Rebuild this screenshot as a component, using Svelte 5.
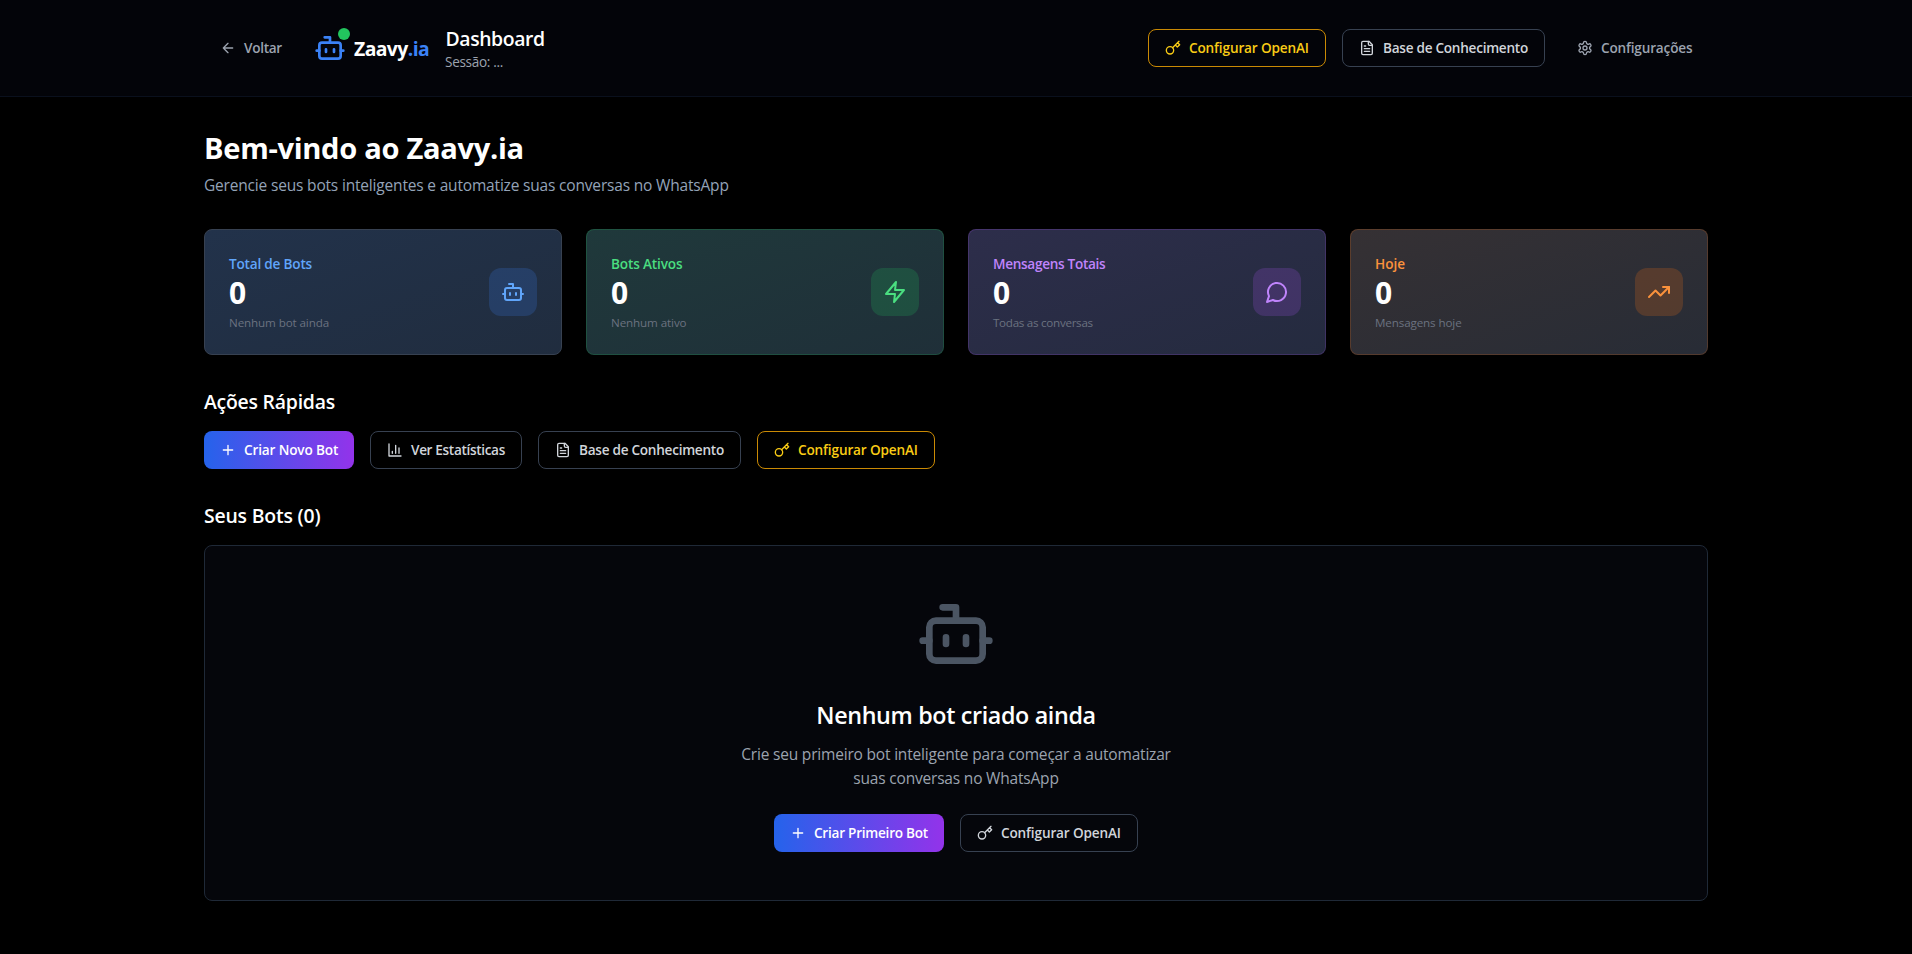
<script>
  const stats = [
    { tone: 'blue', icon: 'bot', label: 'Total de Bots', value: 0, note: 'Nenhum bot ainda', labelTrack: -0.2, noteTrack: -0.11 },
    { tone: 'green', icon: 'zap', label: 'Bots Ativos', value: 0, note: 'Nenhum ativo', labelTrack: -0.16, noteTrack: -0.11 },
    { tone: 'purple', icon: 'chat', label: 'Mensagens Totais', value: 0, note: 'Todas as conversas', labelTrack: -0.31, noteTrack: -0.28 },
    { tone: 'orange', icon: 'trend', label: 'Hoje', value: 0, note: 'Mensagens hoje', labelTrack: 0, noteTrack: -0.12 }
  ];
</script>

{#snippet icon(name, size)}
  <svg class="icon" width={size} height={size} viewBox="0 0 24 24" aria-hidden="true">
    {#if name === 'bot'}
      <path d="M12 8V4H8" /><rect width="16" height="12" x="4" y="8" rx="2" />
      <path d="M2 14h2M20 14h2M15 13v2M9 13v2" />
    {:else if name === 'zap'}
      <polygon points="13 2 3 14 12 14 11 22 21 10 12 10 13 2" />
    {:else if name === 'chat'}
      <path d="M7.9 20A9 9 0 1 0 4 16.1L2 22Z" />
    {:else if name === 'trend'}
      <polyline points="22 7 13.5 15.5 8.5 10.5 2 17" /><polyline points="16 7 22 7 22 13" />
    {:else if name === 'back'}
      <path d="m12 19-7-7 7-7M19 12H5" />
    {:else if name === 'key'}
      <circle cx="7.5" cy="15.5" r="5.5" /><path d="m21 2-9.6 9.6M15.5 7.5l3 3L22 7l-3-3" />
    {:else if name === 'file'}
      <path d="M15 2H6a2 2 0 0 0-2 2v16a2 2 0 0 0 2 2h12a2 2 0 0 0 2-2V7Z" />
      <path d="M14 2v4a2 2 0 0 0 2 2h4M10 9H8M16 13H8M16 17H8" />
    {:else if name === 'chart'}
      <path d="M3 3v18h18M18 17V9M13 17V5M8 17v-3" />
    {:else if name === 'plus'}
      <path d="M5 12h14M12 5v14" />
    {:else if name === 'gear'}
      <path d="M12.22 2h-.44a2 2 0 0 0-2 2v.18a2 2 0 0 1-1 1.73l-.43.25a2 2 0 0 1-2 0l-.15-.08a2 2 0 0 0-2.73.73l-.22.38a2 2 0 0 0 .73 2.73l.15.1a2 2 0 0 1 1 1.72v.51a2 2 0 0 1-1 1.74l-.15.09a2 2 0 0 0-.73 2.73l.22.38a2 2 0 0 0 2.73.73l.15-.08a2 2 0 0 1 2 0l.43.25a2 2 0 0 1 1 1.73V20a2 2 0 0 0 2 2h.44a2 2 0 0 0 2-2v-.18a2 2 0 0 1 1-1.73l.43-.25a2 2 0 0 1 2 0l.15.08a2 2 0 0 0 2.73-.73l.22-.39a2 2 0 0 0-.73-2.73l-.15-.08a2 2 0 0 1-1-1.74v-.5a2 2 0 0 1 1-1.74l.15-.09a2 2 0 0 0 .73-2.73l-.22-.38a2 2 0 0 0-2.73-.73l-.15.08a2 2 0 0 1-2 0l-.43-.25a2 2 0 0 1-1-1.73V4a2 2 0 0 0-2-2z" />
      <circle cx="12" cy="12" r="3" />
    {/if}
  </svg>
{/snippet}

<div class="page">
  <header>
    <div class="wrap bar">
      <div class="side">
        <button class="btn ghost back">{@render icon('back', 16)}<span>Voltar</span></button>
        <div class="logo">
          <span class="mark">{@render icon('bot', 32)}<i class="dot"></i></span>
          <span class="brand">Zaavy<b>.ia</b></span>
        </div>
        <div class="session">
          <h1>Dashboard</h1>
          <p>Sessão: ...</p>
        </div>
      </div>
      <div class="side">
        <button class="btn outline gold openai">{@render icon('key', 16)}<span>Configurar OpenAI</span></button>
        <button class="btn outline base">{@render icon('file', 16)}<span>Base de Conhecimento</span></button>
        <button class="btn ghost settings">{@render icon('gear', 16)}<span>Configurações</span></button>
      </div>
    </div>
  </header>

  <main class="wrap">
    <section class="welcome">
      <h2>Bem-vindo ao Zaavy.ia</h2>
      <p>Gerencie seus bots inteligentes e automatize suas conversas no WhatsApp</p>
    </section>

    <section class="stats">
      {#each stats as s}
        <article class="stat {s.tone}">
          <div>
            <p class="label" style:letter-spacing="{s.labelTrack}px">{s.label}</p>
            <p class="value">{s.value}</p>
            <p class="note" style:letter-spacing="{s.noteTrack}px">{s.note}</p>
          </div>
          <div class="tile">{@render icon(s.icon, 24)}</div>
        </article>
      {/each}
    </section>

    <section class="quick">
      <h3>Ações Rápidas</h3>
      <div class="actions">
        <button class="btn primary new">{@render icon('plus', 16)}<span>Criar Novo Bot</span></button>
        <button class="btn outline chart">{@render icon('chart', 16)}<span>Ver Estatísticas</span></button>
        <button class="btn outline base">{@render icon('file', 16)}<span>Base de Conhecimento</span></button>
        <button class="btn outline gold openai">{@render icon('key', 16)}<span>Configurar OpenAI</span></button>
      </div>
    </section>

    <section>
      <h3 class="bots">Seus Bots (0)</h3>
      <div class="empty">
        {@render icon('bot', 80)}
        <h4>Nenhum bot criado ainda</h4>
        <p>Crie seu primeiro bot inteligente para começar a automatizar<br />suas conversas no WhatsApp</p>
        <div class="actions">
          <button class="btn primary first">{@render icon('plus', 16)}<span>Criar Primeiro Bot</span></button>
          <button class="btn outline openai">{@render icon('key', 16)}<span>Configurar OpenAI</span></button>
        </div>
      </div>
    </section>
  </main>
</div>

<style>
  :global(body) { margin: 0; background: #000; }
  .page {
    min-height: 954px;
    background: #000;
    color: #fff;
    font-family: "Segoe UI", "Open Sans", "Noto Sans", sans-serif;
  }
  h1, h2, h3, h4, p { margin: 0; }
  .wrap { width: 1504px; margin: 0 auto; }
  .icon {
    display: block;
    flex: none;
    fill: none;
    stroke: currentColor;
    stroke-width: 2;
    stroke-linecap: round;
    stroke-linejoin: round;
  }

  header { background: #030409; border-bottom: 1px solid #0a101d; }
  .bar { display: flex; justify-content: space-between; align-items: center; height: 96px; }
  .side { display: flex; align-items: center; gap: 16px; }
  .logo { display: flex; align-items: center; gap: 8px; width: 115px; }
  .mark { position: relative; color: #3b82f6; }
  .dot {
    position: absolute;
    top: -4px;
    right: -4px;
    width: 12px;
    height: 12px;
    border-radius: 50%;
    background: #22c55e;
  }
  .brand { padding-top: 2px; font-size: 19.4px; line-height: 28px; font-weight: 700; letter-spacing: -0.6px; white-space: nowrap; }
  .brand b { color: #3b82f6; font-weight: 700; }
  .session h1 { padding-top: 1px; font-size: 19.4px; line-height: 28px; font-weight: 600; letter-spacing: -0.4px; margin: 0 0 -1px 0.5px; }
  .session p { font-size: 13.6px; line-height: 20px; letter-spacing: -0.32px; color: #9ca3af; }

  .btn {
    box-sizing: border-box;
    display: flex;
    align-items: center;
    gap: 8px;
    height: 38px;
    padding: 0 16px;
    border: 0;
    border-radius: 8px;
    background: transparent;
    font-family: inherit;
    font-size: 13.6px;
    line-height: 20px;
    font-weight: 600;
    white-space: nowrap;
    color: #d1d5db;
  }
  .outline { border: 1px solid #374151; }
  .gold { border-color: #ca8a04; color: #facc15; }
  .ghost { color: #9ca3af; }
  .primary { background: linear-gradient(90deg, #2563eb, #9333ea); color: #fff; }
  .back { width: 94px; letter-spacing: -0.3px; }
  .openai { width: 178px; letter-spacing: -0.15px; }
  .base { width: 203px; letter-spacing: -0.27px; }
  .settings { width: 147px; letter-spacing: -0.18px; }
  .new { width: 150px; letter-spacing: -0.15px; }
  .chart { width: 152px; letter-spacing: -0.34px; }
  .first { width: 170px; letter-spacing: -0.25px; }

  main { padding: 32px 0 53px; }
  .welcome h2 { padding-top: 1px; font-size: 29.1px; line-height: 36px; font-weight: 700; letter-spacing: -0.3px; }
  .welcome p { margin-top: 7px; font-size: 15.5px; line-height: 24px; letter-spacing: -0.18px; color: #94a3b8; }

  .stats { display: grid; grid-template-columns: repeat(4, 1fr); gap: 24px; margin: 32px 0; }
  .stat {
    --rgb: 59, 130, 246;
    display: flex;
    align-items: center;
    justify-content: space-between;
    padding: 24px;
    border: 1px solid rgba(var(--rgb), 0.2);
    border-radius: 8px;
    background: linear-gradient(to bottom right, rgba(var(--rgb), 0.1), rgba(var(--rgb), 0.04)) border-box, #1f2937;
  }
  .stat.blue { border-color: #374151; color: #60a5fa; }
  .green { --rgb: 34, 197, 94; color: #4ade80; }
  .purple { --rgb: 168, 85, 247; color: #c084fc; }
  .orange { --rgb: 249, 115, 22; color: #fb923c; }
  .label { font-size: 13.6px; line-height: 20px; font-weight: 600; }
  .value { padding-top: 1px; font-size: 30px; line-height: 36px; font-weight: 700; color: #fff; }
  .note { margin: 4px 0 -1px; font-size: 11.64px; line-height: 16px; color: #6b7280; }
  .tile {
    display: grid;
    place-items: center;
    width: 48px;
    height: 48px;
    border-radius: 12px;
    background: rgba(var(--rgb), 0.2);
  }

  h3 { padding-top: 1px; margin-bottom: 15px; font-size: 19.4px; line-height: 28px; font-weight: 600; letter-spacing: -0.22px; }
  .bots { letter-spacing: -0.18px; }
  .quick { margin-bottom: 32px; }
  .actions { display: flex; gap: 16px; }

  .empty {
    display: flex;
    flex-direction: column;
    align-items: center;
    padding: 48px;
    border: 1px solid #1f2937;
    border-radius: 8px;
    background: #05060b;
    text-align: center;
  }
  .empty > .icon { color: #4b5563; }
  .empty h4 { margin-top: 25px; font-size: 23.3px; line-height: 32px; font-weight: 600; letter-spacing: -0.35px; }
  .empty p { margin: 11px 0 24px; font-size: 15.5px; line-height: 24px; letter-spacing: -0.19px; color: #9ca3af; }
</style>
